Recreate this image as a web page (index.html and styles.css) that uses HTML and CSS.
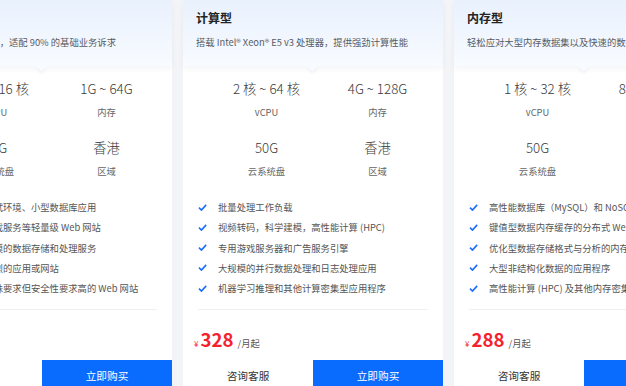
FILE: index.html
```html
<!DOCTYPE html>
<html lang="zh-CN">

<head>
  <meta charset="UTF-8" />
  <meta name="viewport" content="width=device-width, initial-scale=1.0" />
  <title>云服务器实例规格</title>
  <link rel="stylesheet" href="styles.css">
</head>

<body>
  <div class="plans">

    <div class="plan">
      <div class="plan-head">
        <div class="plan-title">通用型</div>
        <div class="plan-desc">计算内存资源均衡，适配 90% 的基础业务诉求</div>
      </div>
      <div class="specs">
        <div class="spec"><div class="spec-value">1 核 ~ 16 核</div><div class="spec-label">vCPU</div></div>
        <div class="spec"><div class="spec-value">1G ~ 64G</div><div class="spec-label">内存</div></div>
        <div class="spec"><div class="spec-value">50G</div><div class="spec-label">云系统盘</div></div>
        <div class="spec"><div class="spec-value">香港</div><div class="spec-label">区域</div></div>
      </div>
      <ul class="features">
        <li><svg class="check" viewBox="0 0 10 8"><path d="M1 4.2 L3.8 7 L9.2 1" /></svg>企业开发测试环境、小型数据库应用</li>
        <li><svg class="check" viewBox="0 0 10 8"><path d="M1 4.2 L3.8 7 L9.2 1" /></svg>小型网页游戏服务等轻量级 Web 网站</li>
        <li><svg class="check" viewBox="0 0 10 8"><path d="M1 4.2 L3.8 7 L9.2 1" /></svg>需要中等规模的数据存储和处理服务</li>
        <li><svg class="check" viewBox="0 0 10 8"><path d="M1 4.2 L3.8 7 L9.2 1" /></svg>流量波动剧烈的应用或网站</li>
        <li><svg class="check" viewBox="0 0 10 8"><path d="M1 4.2 L3.8 7 L9.2 1" /></svg>对性能无特殊要求但安全性要求高的 Web 网站</li>
      </ul>
      <div class="divider"></div>
      <div class="price"><span class="yen">¥</span><span class="amount">168</span><span class="unit">/月起</span></div>
      <div class="actions">
        <button class="btn btn-ghost">咨询客服</button>
        <button class="btn btn-primary">立即购买</button>
      </div>
    </div>

    <div class="plan">
      <div class="plan-head">
        <div class="plan-title">计算型</div>
        <div class="plan-desc">搭载 Intel® Xeon® E5 v3 处理器，提供强劲计算性能</div>
      </div>
      <div class="specs">
        <div class="spec"><div class="spec-value">2 核 ~ 64 核</div><div class="spec-label">vCPU</div></div>
        <div class="spec"><div class="spec-value">4G ~ 128G</div><div class="spec-label">内存</div></div>
        <div class="spec"><div class="spec-value">50G</div><div class="spec-label">云系统盘</div></div>
        <div class="spec"><div class="spec-value">香港</div><div class="spec-label">区域</div></div>
      </div>
      <ul class="features">
        <li><svg class="check" viewBox="0 0 10 8"><path d="M1 4.2 L3.8 7 L9.2 1" /></svg>批量处理工作负载</li>
        <li><svg class="check" viewBox="0 0 10 8"><path d="M1 4.2 L3.8 7 L9.2 1" /></svg>视频转码，科学建模，高性能计算 (HPC)</li>
        <li><svg class="check" viewBox="0 0 10 8"><path d="M1 4.2 L3.8 7 L9.2 1" /></svg>专用游戏服务器和广告服务引擎</li>
        <li><svg class="check" viewBox="0 0 10 8"><path d="M1 4.2 L3.8 7 L9.2 1" /></svg>大规模的并行数据处理和日志处理应用</li>
        <li><svg class="check" viewBox="0 0 10 8"><path d="M1 4.2 L3.8 7 L9.2 1" /></svg>机器学习推理和其他计算密集型应用程序</li>
      </ul>
      <div class="divider"></div>
      <div class="price"><span class="yen">¥</span><span class="amount">328</span><span class="unit">/月起</span></div>
      <div class="actions">
        <button class="btn btn-ghost">咨询客服</button>
        <button class="btn btn-primary">立即购买</button>
      </div>
    </div>

    <div class="plan">
      <div class="plan-head">
        <div class="plan-title">内存型</div>
        <div class="plan-desc">轻松应对大型内存数据集以及快速的数据处理需求</div>
      </div>
      <div class="specs">
        <div class="spec"><div class="spec-value">1 核 ~ 32 核</div><div class="spec-label">vCPU</div></div>
        <div class="spec"><div class="spec-value">8G ~ 256G</div><div class="spec-label">内存</div></div>
        <div class="spec"><div class="spec-value">50G</div><div class="spec-label">云系统盘</div></div>
        <div class="spec"><div class="spec-value">香港</div><div class="spec-label">区域</div></div>
      </div>
      <ul class="features">
        <li><svg class="check" viewBox="0 0 10 8"><path d="M1 4.2 L3.8 7 L9.2 1" /></svg>高性能数据库（MySQL）和 NoSQL 数据库</li>
        <li><svg class="check" viewBox="0 0 10 8"><path d="M1 4.2 L3.8 7 L9.2 1" /></svg>键值型数据内存缓存的分布式 Web 规模缓存</li>
        <li><svg class="check" viewBox="0 0 10 8"><path d="M1 4.2 L3.8 7 L9.2 1" /></svg>优化型数据存储格式与分析的内存数据库</li>
        <li><svg class="check" viewBox="0 0 10 8"><path d="M1 4.2 L3.8 7 L9.2 1" /></svg>大型非结构化数据的应用程序</li>
        <li><svg class="check" viewBox="0 0 10 8"><path d="M1 4.2 L3.8 7 L9.2 1" /></svg>高性能计算 (HPC) 及其他内存密集型应用</li>
      </ul>
      <div class="divider"></div>
      <div class="price"><span class="yen">¥</span><span class="amount">288</span><span class="unit">/月起</span></div>
      <div class="actions">
        <button class="btn btn-ghost">咨询客服</button>
        <button class="btn btn-primary">立即购买</button>
      </div>
    </div>

  </div>
</body>

</html>
```

FILE: styles.css
```css
body {
  margin: 0;
  background-color: #f3f4f7;
  color: #333;
  font-family: "Noto Sans CJK SC", "Noto Sans", sans-serif;
  overflow: hidden;
}

.plans {
  display: flex;
  gap: 11px;
  width: max-content;
  margin-left: -88px;
}

.plan {
  width: 260px;
  background: #fff;
  display: flex;
  flex-direction: column;
}

.plan-head {
  position: relative;
  padding: 10px 13px 17px;
  background: linear-gradient(180deg, #e9f1fd 0%, #f8fbff 100%);
  box-shadow: 0 3px 6px rgba(30, 50, 90, 0.05);
}

/* little notch under the header */
.plan-head::after {
  content: "";
  position: absolute;
  left: 50%;
  bottom: -4px;
  width: 7px;
  height: 7px;
  margin-left: -4px;
  background: #f8fbff;
  transform: rotate(45deg);
  box-shadow: 2px 2px 3px rgba(30, 50, 90, 0.05);
}

.plan-title {
  font-size: 12px;
  line-height: 16px;
  font-weight: bold;
  color: #222;
}

.plan-desc {
  margin-top: 9px;
  font-size: 9.33px;
  line-height: 14px;
  color: #555b66;
  white-space: nowrap;
}

.specs {
  display: grid;
  grid-template-columns: 1fr 1fr;
  row-gap: 20px;
  padding: 14px 10px 0 28px;
  text-align: center;
}

.spec-value {
  font-size: 13.33px;
  line-height: 18px;
  font-weight: 300;
  color: #3a3a3a;
  white-space: nowrap;
}

.spec-label {
  margin-top: 7px;
  font-size: 9.33px;
  line-height: 14px;
  color: #666;
}

.features {
  list-style: none;
  margin: 19px 0 0;
  padding: 0 15px;
}

.features li {
  display: flex;
  align-items: center;
  gap: 11px;
  height: 20.25px;
  font-size: 9.33px;
  color: #555;
  white-space: nowrap;
}

.check {
  flex-shrink: 0;
  width: 9px;
  height: 7px;
}

.check path {
  fill: none;
  stroke: #1a6dff;
  stroke-width: 1.8;
}

.divider {
  margin: 11px 15px 0;
  border-top: 1px solid #eef0f3;
}

.price {
  display: flex;
  align-items: baseline;
  margin-top: 17px;
  padding: 0 11px;
  line-height: 24px;
  color: #f5222d;
}

.yen {
  font-size: 8px;
  margin-right: 2px;
}

.amount {
  font-size: 18.67px;
  font-weight: bold;
}

.unit {
  margin-left: 4px;
  font-size: 9.33px;
  color: #555;
}

.actions {
  display: grid;
  grid-template-columns: 1fr 1fr;
  margin-top: 4px;
}

.btn {
  height: 31px;
  border: none;
  font-family: inherit;
  font-size: 10.67px;
  cursor: pointer;
}

.btn-ghost {
  background: #fff;
  color: #333;
}

.btn-primary {
  background: #0a6cff;
  color: #fff;
}
```
